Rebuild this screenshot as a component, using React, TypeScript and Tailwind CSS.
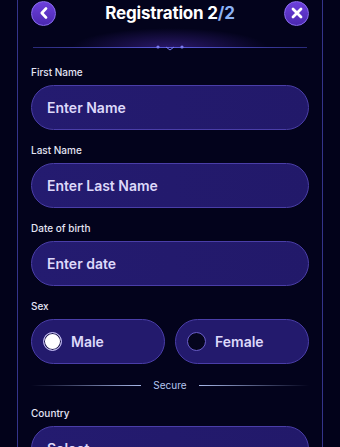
import React from "react";

const font = { fontFamily: "Inter, 'Noto Sans', sans-serif" };

function Field({ label, placeholder }: { label: string; placeholder: string }) {
  return (
    <div className="flex shrink-0 flex-col">
      <div className="h-[12px] shrink-0 text-[10px] leading-[12px] font-medium text-[#e4e4f4]">{label}</div>
      <div className="mt-[7px] flex h-[45px] shrink-0 items-center rounded-full border border-[#4a3ea8] bg-gradient-to-r from-[#241b70] to-[#22196a] pl-[15px] text-[14px] font-semibold text-[#ddd8fa]">
        {placeholder}
      </div>
    </div>
  );
}

export default function App() {
  return (
    <div className="h-[447px] w-[340px] overflow-hidden bg-[#02021a]" style={font}>
      <div className="mx-[17px] flex min-h-[447px] flex-col border-x border-[#34348a] bg-[#03031c] px-[13px]">
        {/* header */}
        <div className="flex h-[26px] shrink-0 items-center justify-between">
          <div className="flex h-[25px] w-[25px] items-center justify-center rounded-full border border-[#8a6df0] bg-gradient-to-b from-[#6d40dc] to-[#4b28b0]">
            <svg width="10" height="12" viewBox="0 0 10 12">
              <path d="M7 1.5 L2.8 6 L7 10.5" fill="none" stroke="white" strokeWidth="2.6" strokeLinecap="round" strokeLinejoin="round" />
            </svg>
          </div>
          <div className="text-[17px] font-bold leading-none tracking-[-0.2px] text-white">
            Registration 2<span className="text-[#8cb2f6]">/2</span>
          </div>
          <div className="flex h-[25px] w-[25px] items-center justify-center rounded-full border border-[#8a6df0] bg-gradient-to-b from-[#6d40dc] to-[#4b28b0]">
            <svg width="12" height="12" viewBox="0 0 12 12">
              <path d="M2 2 L10 10 M10 2 L2 10" fill="none" stroke="white" strokeWidth="2.8" strokeLinecap="round" />
            </svg>
          </div>
        </div>
        {/* ornament */}
        <div className="relative h-[22px] shrink-0">
          <div className="absolute inset-x-[40px] bottom-0 h-[20px] bg-[radial-gradient(ellipse_at_bottom,rgba(90,50,200,0.45),transparent_70%)]" />
          <div className="absolute bottom-0 left-[2px] right-[2px] h-px bg-gradient-to-r from-[#2a2a7a] via-[#5a5ae0] to-[#2a2a7a]" />
          <svg className="absolute bottom-[-3px] left-1/2 -translate-x-1/2" width="30" height="7" viewBox="0 0 30 7">
            <circle cx="3" cy="3" r="1.6" fill="#7a7af0" />
            <circle cx="27" cy="3" r="1.6" fill="#7a7af0" />
            <path d="M11 3 L15 6 L19 3" fill="none" stroke="#7a7af0" strokeWidth="1" />
          </svg>
        </div>
        <div className="mt-[18px] flex shrink-0 flex-col gap-[14px]">
          <Field label="First Name" placeholder="Enter Name" />
          <Field label="Last Name" placeholder="Enter Last Name" />
          <Field label="Date of birth" placeholder="Enter date" />
          <div className="flex flex-col">
            <div className="h-[12px] text-[10px] leading-[12px] font-medium text-[#e4e4f4]">Sex</div>
            <div className="mt-[7px] flex gap-[10px]">
              <div className="flex h-[45px] flex-1 items-center gap-[9px] rounded-full border border-[#4a3ea8] bg-[#231a6d] pl-[11px] text-[14px] font-semibold text-[#ddd8fa]">
                <div className="h-[19px] w-[19px] rounded-full border-[1.5px] border-[#b8b0ee] bg-white shadow-[inset_0_0_0_1px_#1a1450]" />
                Male
              </div>
              <div className="flex h-[45px] flex-1 items-center gap-[9px] rounded-full border border-[#4a3ea8] bg-[#231a6d] pl-[11px] text-[14px] font-semibold text-[#ddd8fa]">
                <div className="h-[19px] w-[19px] rounded-full border border-[#6a5ec8] bg-[#05051e]" />
                Female
              </div>
            </div>
          </div>
        </div>
        <div className="mt-[15px] flex h-[12px] shrink-0 items-center gap-[12px]">
          <div className="h-px flex-1 bg-gradient-to-r from-transparent to-[#a8b8e8]" />
          <div className="text-[10px] leading-[12px] text-[#b4c6f0]">Secure</div>
          <div className="h-px flex-1 bg-gradient-to-l from-transparent to-[#a8b8e8]" />
        </div>
        <div className="mt-[16px] shrink-0">
          <Field label="Country" placeholder="Select" />
        </div>
      </div>
    </div>
  );
}
